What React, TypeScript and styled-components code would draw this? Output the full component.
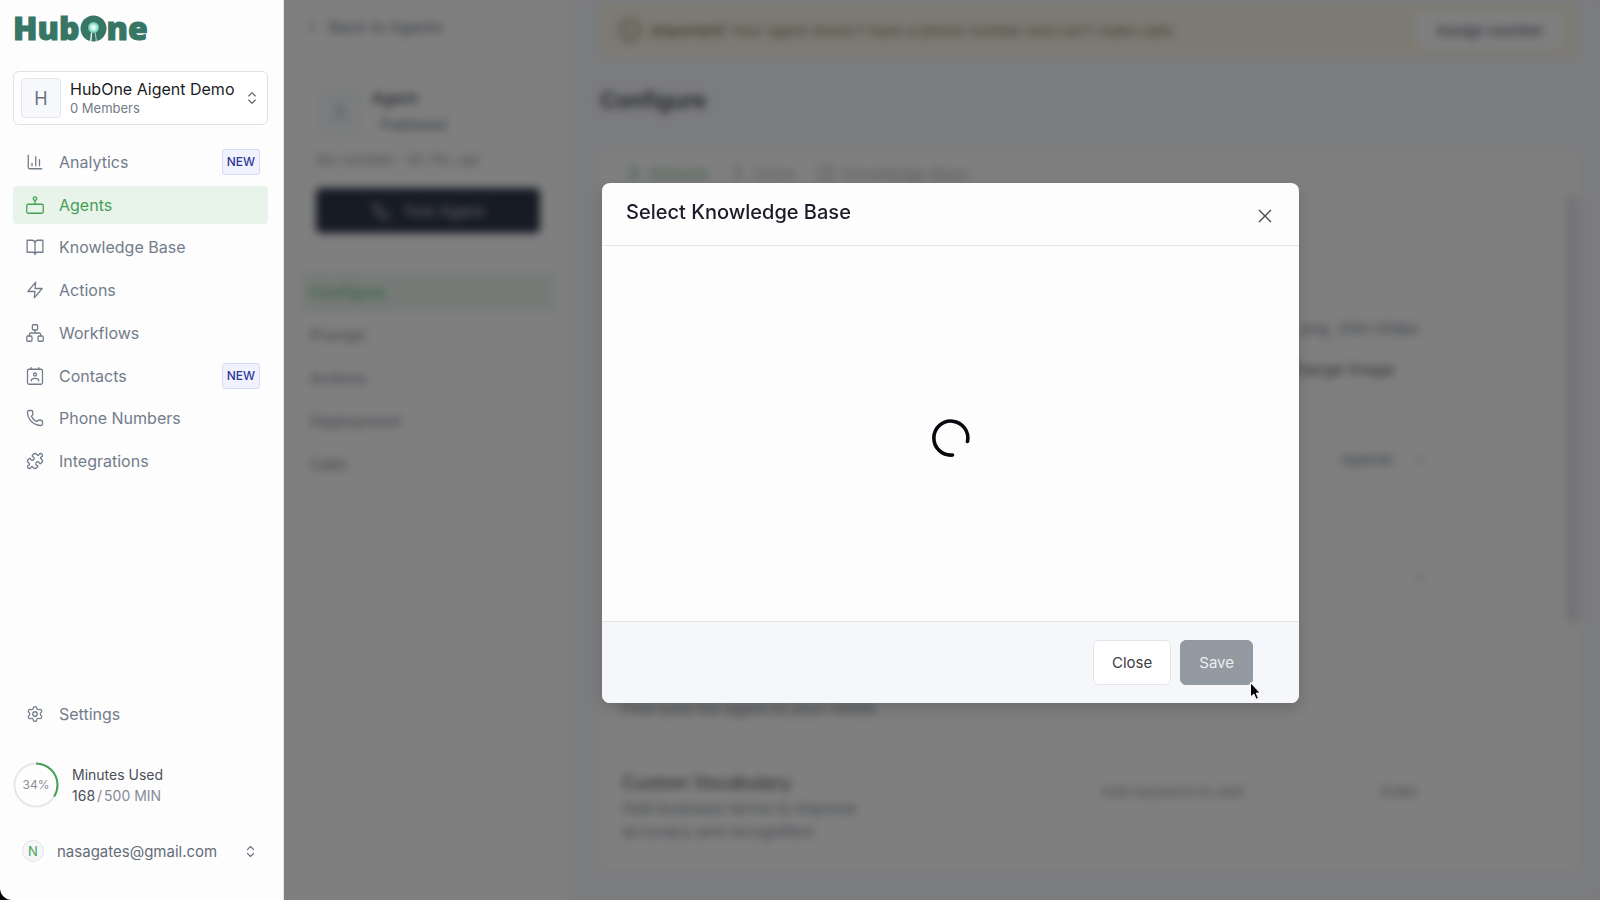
import React from "react";
import styled, { createGlobalStyle, css } from "styled-components";
import { ChartColumn, Phone, Puzzle, Settings, ChevronsUpDown, ChevronLeft, ChevronDown, Info, Mic, User, BookOpen } from "lucide-react";

const GlobalStyle = createGlobalStyle`
  * { box-sizing: border-box; }
  body {
    margin: 0;
    background: #000;
    font-family: Inter, "Liberation Sans", sans-serif;
    color: #1c1c28;
  }
  button, input, select { font-family: inherit; font-size: inherit; }
  h1, h2, p { margin: 0; }
`;

/* ---------- page frame ---------- */

const Page = styled.div`
  display: flex;
  height: 100vh;
  overflow: hidden;
`;

const Sidebar = styled.aside`
  display: flex;
  flex-direction: column;
  flex: 0 0 284px;
  padding: 12px 15px 37px 13px;
  background: #fdfdfd;
  border-right: 1px solid #e3e3e5;
  border-bottom-left-radius: 12px;
`;

const Workspace = styled.div`
  position: relative;
  display: flex;
  flex: 1;
  min-width: 0;
  background: #fff;
`;

/* ---------- sidebar ---------- */

const Logo = styled.a`
  display: flex;
  align-items: center;
  height: 32px;
  color: #377565;
  font: 800 32px/32px "Open Sans", sans-serif;
  -webkit-text-stroke: 1px #377565;
  text-decoration: none;
  svg { display: block; }
`;

const AccountSwitcher = styled.button`
  display: flex;
  align-items: center;
  height: 54px;
  margin: 27px 0 18px;
  padding: 0 7px;
  border: 1px solid #dfe1e6;
  border-radius: 6px;
  background: #fff;
  color: #5d6470;
  text-align: left;
`;

const AccountInitial = styled.span`
  display: grid;
  place-items: center;
  width: 40px;
  height: 40px;
  margin-right: 9px;
  border: 1px solid #e4e6ec;
  border-radius: 4px;
  background: #f8f9fc;
  color: #6c717d;
  font-size: 18px;
`;

const AccountText = styled.span`
  flex: 1;
  white-space: nowrap;
`;

const AccountName = styled.span`
  display: block;
  color: #1c1c24;
  font-size: 16px;
  line-height: 20px;
`;

const AccountMeta = styled.span`
  display: block;
  color: #747a86;
  font-size: 13px;
  line-height: 19px;
`;

const Nav = styled.nav`
  display: flex;
  flex-direction: column;
  justify-content: space-between;
  height: 337px;
`;

const NavLink = styled.a<{ $active?: boolean }>`
  display: flex;
  align-items: center;
  gap: 15px;
  flex: 0 0 38px;
  padding: 0 8px 0 13px;
  border-radius: 4px;
  background: ${(p) => (p.$active ? "#e8f4e9" : "transparent")};
  color: ${(p) => (p.$active ? "#45a055" : "#737c8a")};
  font-size: 16px;
  text-decoration: none;
  svg { flex: none; }
`;

const NewBadge = styled.span`
  margin-left: auto;
  padding: 0 4px;
  border: 1px solid #d5daf5;
  border-radius: 3px;
  background: #f0f3fd;
  color: #303898;
  font-size: 12px;
  font-weight: 500;
  line-height: 24px;
`;

const SidebarFoot = styled.div`
  display: flex;
  flex-direction: column;
  margin-top: auto;
`;

const Usage = styled.section`
  display: flex;
  align-items: center;
  gap: 13px;
  height: 46px;
  margin: 29px 0 31px;
  color: #4a4f59;
  font-size: 14px;
  line-height: 21px;
`;

const Ring = styled.div`
  display: grid;
  width: 46px;
  height: 46px;
  > * { grid-area: 1 / 1; }
  span {
    place-self: center;
    color: #8a8e96;
    font-size: 12px;
    line-height: 16px;
  }
`;

const UsageLine = styled.p`
  display: flex;
  gap: 2px;
`;

const UsageTotal = styled.span`
  color: #858b96;
`;

const UserSwitcher = styled.button`
  display: flex;
  align-items: center;
  gap: 13px;
  height: 24px;
  padding: 0 10px 0 9px;
  border: 0;
  background: none;
  color: #646c7a;
  font-size: 15px;
`;

const UserInitial = styled.span`
  display: grid;
  place-items: center;
  width: 22px;
  height: 22px;
  border: 1px solid #e2e4e8;
  border-radius: 50%;
  background: #f5f6f8;
  color: #45a055;
  font-size: 13px;
`;

const UserMail = styled.span`
  flex: 1;
  text-align: left;
`;

/* ---------- agent column ---------- */

const AgentColumn = styled.div`
  flex: 0 0 286px;
  padding: 14px 14px 0 17px;
  border-right: 1px solid #eef0f4;
`;

const BackLink = styled.a`
  display: flex;
  align-items: center;
  gap: 9px;
  height: 26px;
  padding-left: 3px;
  color: #777d89;
  font-size: 16px;
  text-decoration: none;
`;

const AgentCard = styled.section`
  display: flex;
  flex-direction: column;
  margin: 33px 0 25px;
  padding: 14px;
  border: 1px solid #f3f4f6;
  border-radius: 8px;
`;

const AgentHead = styled.div`
  display: flex;
  gap: 9px;
`;

const AgentAvatar = styled.span`
  display: grid;
  place-items: center;
  width: 47px;
  height: 47px;
  border-radius: 6px;
  background: #f7f9fc;
  color: #a3b5b0;
`;

const AgentName = styled.h2`
  color: #4a4f5a;
  font-size: 16px;
  font-weight: 500;
  line-height: 20px;
`;

const AgentStatus = styled.p`
  margin-top: 6px;
  padding: 0 9px;
  color: #66707c;
  font-size: 14px;
  line-height: 22px;
`;

const AgentMeta = styled.p`
  margin: 12px 0 16px;
  color: #999faa;
  font-size: 15px;
  line-height: 24px;
`;

const TestButton = styled.button`
  display: flex;
  align-items: center;
  justify-content: center;
  gap: 13px;
  height: 45px;
  border: 0;
  border-radius: 5px;
  background: #2e364a;
  color: #c6c6d6;
  font-size: 16px;
`;

const SubNav = styled.nav`
  display: grid;
  gap: 5px;
`;

const SubLink = styled.a<{ $active?: boolean }>`
  padding: 0 9px;
  border-radius: 4px;
  background: ${(p) => (p.$active ? "#ebf5ef" : "transparent")};
  color: ${(p) => (p.$active ? "#62ba7c" : "#858a97")};
  font-size: 16px;
  line-height: 38px;
  text-decoration: none;
`;

/* ---------- configuration pane ---------- */

const Main = styled.main`
  display: flex;
  flex-direction: column;
  flex: 1;
  min-width: 0;
  padding: 4px 22px 30px 30px;
  background: #f7f8fc;
`;

const Notice = styled.div`
  display: flex;
  align-items: center;
  gap: 9px;
  height: 52px;
  padding: 0 15px 0 18px;
  border-radius: 6px;
  background: #f8f5e6;
  color: #8f826c;
  font-size: 15px;
  button {
    width: 146px;
    height: 38px;
    margin-left: auto;
    border: 0;
    border-radius: 5px;
    background: #fff;
    color: #686f7c;
    font-weight: 500;
  }
  strong { font-weight: 600; }
`;

const PageTitle = styled.h1`
  margin: 28px 0 36px;
  color: #3d4350;
  font-size: 22px;
  font-weight: 600;
  line-height: 32px;
`;

const Panel = styled.section`
  display: flex;
  flex-direction: column;
  flex: 1;
  min-height: 0;
  overflow: hidden;
  border-radius: 8px;
  background: #fff;
`;

const Tabs = styled.div`
  display: flex;
  gap: 22px;
  height: 43px;
  padding: 0 26px;
  border-bottom: 1px solid #f5f6f8;
`;

const Tab = styled.button<{ $active?: boolean }>`
  display: flex;
  align-items: center;
  gap: 7px;
  padding: 0;
  border: 0;
  background: none;
  color: ${(p) => (p.$active ? "#7cc398" : "#b0b3bb")};
  font-size: 16px;
`;

const PanelBody = styled.div`
  display: flex;
  flex: 1;
  min-height: 0;
`;

const Rows = styled.div`
  flex: 1;
  padding: 0 31px 0 22px;
`;

const Row = styled.div<{ $h: number }>`
  display: flex;
  justify-content: space-between;
  height: ${(p) => p.$h}px;
  padding: 24px 96px 0 0;
  border-bottom: 1px solid #f0f0f3;
  &:last-child { border-bottom: 0; }
`;

const RowText = styled.div`
  width: 280px;
  color: #868e9a;
  font-size: 16px;
  line-height: 23px;
  h2 {
    color: #62656c;
    font-size: 18px;
    font-weight: 500;
    line-height: 28px;
  }
`;

const Control = styled.div`
  display: flex;
  flex-direction: column;
  align-items: flex-end;
  width: 354px;
`;

const field = css`
  width: 100%;
  height: 46px;
  padding: 0 15px;
  border: 1px solid #eceef1;
  border-radius: 5px;
  background: transparent;
  color: #78838e;
  font-size: 15px;
`;

const TextField = styled.input`
  ${field}
  &::placeholder { color: #989eac; }
`;

const SelectWrap = styled.div`
  display: grid;
  align-items: center;
  width: 100%;
  color: #8a909c;
  > * { grid-area: 1 / 1; }
  svg { justify-self: end; margin-right: 12px; }
`;

const Select = styled.select`
  ${field}
  appearance: none;
  padding-right: 45px;
  text-align: right;
  text-align-last: right;
`;

const Hint = styled.p`
  padding-right: 20px;
  color: #7d8693;
  font-size: 15px;
  line-height: 24px;
`;

const ImageButton = styled.button`
  width: 150px;
  height: 43px;
  margin: 6px 24px 0 0;
  border: 1px solid #eceef1;
  border-radius: 5px;
  background: transparent;
  color: #62656c;
  font-size: 16px;
`;

const WordField = styled.div`
  display: flex;
  align-items: center;
  width: 100%;
  height: 44px;
  padding-right: 20px;
  border: 1px solid #eceef1;
  border-radius: 5px;
  input { border: 0; height: 40px; min-width: 0; flex: 1; }
  button {
    padding: 0;
    border: 0;
    background: none;
    color: #9296a0;
    font-size: 15px;
  }
`;

const ScrollTrack = styled.div`
  width: 12px;
  height: 429px;
  border-radius: 6px;
  background: #e3e6e9;
`;

/* ---------- dialog ---------- */

const Overlay = styled.div`
  position: absolute;
  inset: 0;
  display: flex;
  align-items: center;
  justify-content: center;
  padding: 0 0 14px 17px;
  background: rgba(0, 0, 0, 0.5);
  backdrop-filter: blur(4px);
`;

const Dialog = styled.div`
  display: flex;
  flex-direction: column;
  width: 697px;
  max-width: 90%;
  overflow: hidden;
  border-radius: 8px;
  background: #fdfdfd;
  box-shadow: 0 6px 16px rgba(0, 0, 0, 0.16);
`;

const DialogHead = styled.header`
  display: flex;
  justify-content: space-between;
  height: 63px;
  padding: 15px 24px 0;
  border-bottom: 1px solid #e3e5e9;
  h2 {
    font-size: 20px;
    font-weight: 500;
    line-height: 28px;
  }
`;

const IconButton = styled.button`
  display: grid;
  place-items: center;
  width: 20px;
  height: 36px;
  padding: 0;
  border: 0;
  background: none;
  color: #44464d;
`;

const DialogBody = styled.div`
  display: grid;
  place-items: center;
  height: 375px;
  padding-top: 8px;
`;

const DialogFoot = styled.footer`
  display: flex;
  justify-content: flex-end;
  gap: 9px;
  padding: 18px 46px 18px 24px;
  border-top: 1px solid #e3e5e9;
  background: #f6f7fb;
`;

const Button = styled.button<{ $primary?: boolean }>`
  height: 45px;
  padding: 0 18px;
  border: 1px solid ${(p) => (p.$primary ? "#9299a1" : "#e2e4e7")};
  border-radius: 6px;
  background: ${(p) => (p.$primary ? "#9299a1" : "#fff")};
  color: ${(p) => (p.$primary ? "#eceef0" : "#3c3e44")};
  font-size: 15px;
`;

const SaveSlot = styled.div`
  position: relative;
`;

const Pointer = styled.svg`
  position: absolute;
  right: -8px;
  bottom: -16px;
`;

/* ---------- drawings ---------- */

const Glyph = ({ children }: { children: React.ReactNode }) => (
  <svg width="18" height="18" viewBox="0 0 24 24" fill="none" stroke="currentColor" strokeWidth="1.7" strokeLinecap="round" strokeLinejoin="round" aria-hidden="true">
    {children}
  </svg>
);

const AgentIcon = () => (
  <Glyph>
    <rect x="1" y="11" width="22" height="12" rx="2" />
    <circle cx="12" cy="3.5" r="2.3" />
    <path d="M12 6v5" />
  </Glyph>
);

const BookIcon = () => (
  <Glyph>
    <path d="M1.500 3H8a4 4 0 0 1 4 4v15a3 3 0 0 0-3-3H1.500zM22.500 3H16a4 4 0 0 0-4 4v15a3 3 0 0 1 3-3h7.500z" />
  </Glyph>
);

const ZapIcon = () => (
  <Glyph>
    <path d="M13 1.500 2.500 14H12l-1 8.500L21.500 10H12z" />
  </Glyph>
);

const WorkflowIcon = () => (
  <Glyph>
    <rect x="8.500" y="1" width="7" height="7" rx="1.500" />
    <rect x="1" y="16" width="7" height="7" rx="1.500" />
    <rect x="16" y="16" width="7" height="7" rx="1.500" />
    <path d="M12 8v4M4.500 16v-2a2 2 0 0 1 2-2h11a2 2 0 0 1 2 2v2" />
  </Glyph>
);

const ContactIcon = () => (
  <Glyph>
    <rect x="2" y="3" width="20" height="20" rx="2" />
    <path d="M7 1v2M17 1v2M7 18.500c0-2 1.700-3.200 5-3.200s5 1.200 5 3.200" />
    <circle cx="12" cy="10" r="2" />
  </Glyph>
);

const LogoRing = () => (
  <svg width="27" height="27" viewBox="0 0 27 27" aria-hidden="true">
    <defs>
      <radialGradient id="bead">
        <stop offset="0" stopColor="#f4fffb" />
        <stop offset="0.45" stopColor="#c9f3e5" />
        <stop offset="1" stopColor="#52c9a4" />
      </radialGradient>
    </defs>
    <circle cx="13.500" cy="13.500" r="13" fill="#377565" stroke="none" />
    <path d="M11 17h1.200l-.8 9.500-1.400-.2z" fill="#fdfdfd" stroke="none" />
    <path d="M14.600 17h.9l1.500 9.300-1 .2z" fill="#b9d3cb" stroke="none" />
    <circle cx="13.500" cy="12.500" r="5.500" fill="url(#bead)" stroke="none" />
  </svg>
);

const navItems = [
  { label: "Analytics", icon: <ChartColumn size={18} strokeWidth={1.7} />, fresh: true },
  { label: "Agents", icon: <AgentIcon />, active: true },
  { label: "Knowledge Base", icon: <BookIcon /> },
  { label: "Actions", icon: <ZapIcon /> },
  { label: "Workflows", icon: <WorkflowIcon /> },
  { label: "Contacts", icon: <ContactIcon />, fresh: true },
  { label: "Phone Numbers", icon: <Phone size={18} strokeWidth={1.7} /> },
  { label: "Integrations", icon: <Puzzle size={18} strokeWidth={1.7} /> },
];

const subItems = ["Configure", "Prompt", "Actions", "Deployment", "Calls"];

export default function App() {
  return (
    <>
      <GlobalStyle />
      <Page>
        <Sidebar>
          <Logo href="#" aria-label="HubOne">
            Hub
            <LogoRing />
            ne
          </Logo>
          <AccountSwitcher>
            <AccountInitial>H</AccountInitial>
            <AccountText>
              <AccountName>HubOne Aigent Demo</AccountName>
              <AccountMeta>0 Members</AccountMeta>
            </AccountText>
            <ChevronsUpDown size={16} strokeWidth={1.7} />
          </AccountSwitcher>
          <Nav>
            {navItems.map((item) => (
              <NavLink key={item.label} href="#" $active={item.active}>
                {item.icon}
                {item.label}
                {item.fresh && <NewBadge>NEW</NewBadge>}
              </NavLink>
            ))}
          </Nav>
          <SidebarFoot>
            <NavLink href="#">
              <Settings size={18} strokeWidth={1.7} />
              Settings
            </NavLink>
            <Usage>
              <Ring>
                <svg width="46" height="46" viewBox="0 0 46 46" fill="none" strokeWidth="2" aria-hidden="true">
                  <circle cx="23" cy="23" r="21.500" stroke="#e6e7e9" />
                  <circle cx="23" cy="23" r="21.500" stroke="#45a055" pathLength="100" strokeDasharray="34 66" transform="rotate(-90 23 23)" />
                </svg>
                <span>34%</span>
              </Ring>
              <div>
                <p>Minutes Used</p>
                <UsageLine>
                  <span>168</span>
                  <UsageTotal>/</UsageTotal>
                  <UsageTotal>500 MIN</UsageTotal>
                </UsageLine>
              </div>
            </Usage>
            <UserSwitcher>
              <UserInitial>N</UserInitial>
              <UserMail>nasagates@gmail.com</UserMail>
              <ChevronsUpDown size={15} strokeWidth={1.7} />
            </UserSwitcher>
          </SidebarFoot>
        </Sidebar>

        <Workspace>
          <AgentColumn>
            <BackLink href="#">
              <ChevronLeft size={16} />
              Back to Agents
            </BackLink>
            <AgentCard>
              <AgentHead>
                <AgentAvatar>
                  <User size={20} />
                </AgentAvatar>
                <div>
                  <AgentName>Agent</AgentName>
                  <AgentStatus>Published</AgentStatus>
                </div>
              </AgentHead>
              <AgentMeta>No number · ID: Pk..upl</AgentMeta>
              <TestButton>
                <Phone size={18} />
                Test Agent
              </TestButton>
            </AgentCard>
            <SubNav>
              {subItems.map((label, i) => (
                <SubLink key={label} href="#" $active={i === 0}>
                  {label}
                </SubLink>
              ))}
            </SubNav>
          </AgentColumn>

          <Main>
            <Notice>
              <Info size={24} />
              <span>
                <strong>Important!</strong> Your agent doesn't have a phone number and can't make calls
              </span>
              <button>Assign number</button>
            </Notice>
            <PageTitle>Configure</PageTitle>
            <Panel>
              <Tabs>
                <Tab $active>
                  <Mic size={16} />
                  General
                </Tab>
                <Tab>
                  <User size={16} />
                  Voice
                </Tab>
                <Tab>
                  <BookOpen size={18} />
                  Knowledge Base
                </Tab>
              </Tabs>
              <PanelBody>
                <Rows>
                  <Row $h={98}>
                    <RowText />
                    <Control>
                      <TextField aria-label="Name" />
                    </Control>
                  </Row>
                  <Row $h={119}>
                    <RowText />
                    <Control>
                      <Hint>png, 256x256px</Hint>
                      <ImageButton>Change Image</ImageButton>
                    </Control>
                  </Row>
                  <Row $h={119}>
                    <RowText />
                    <Control>
                      <SelectWrap>
                        <Select aria-label="Provider">
                          <option>OpenAI</option>
                        </Select>
                        <ChevronDown size={15} />
                      </SelectWrap>
                    </Control>
                  </Row>
                  <Row $h={119}>
                    <RowText />
                    <Control>
                      <SelectWrap>
                        <Select aria-label="Language" />
                        <ChevronDown size={15} />
                      </SelectWrap>
                    </Control>
                  </Row>
                  <Row $h={95}>
                    <RowText>
                      <br />
                      Fine tune the agent to your needs
                    </RowText>
                  </Row>
                  <Row $h={125}>
                    <RowText>
                      <h2>Custom Vocabulary</h2>
                      Add business terms to improve accuracy and recognition
                    </RowText>
                    <Control>
                      <WordField>
                        <TextField aria-label="Word" placeholder="Add keyword to add" />
                        <button>Enter</button>
                      </WordField>
                    </Control>
                  </Row>
                </Rows>
                <ScrollTrack />
              </PanelBody>
            </Panel>
          </Main>

          <Overlay>
            <Dialog role="dialog" aria-modal="true" aria-labelledby="dialog-title">
              <DialogHead>
                <h2 id="dialog-title">Select Knowledge Base</h2>
                <IconButton aria-label="Close dialog">
                  <svg width="14" height="14" viewBox="0 0 14 14" fill="none" stroke="currentColor" strokeWidth="1.300" aria-hidden="true">
                    <path d="M1 1l12 12M13 1 1 13" />
                  </svg>
                </IconButton>
              </DialogHead>
              <DialogBody>
                <svg width="40" height="40" viewBox="0 0 40 40" fill="none" stroke="#08080f" strokeWidth="3.600" strokeLinecap="round" role="img" aria-label="Loading">
                  <path d="M36.500 23.500A17 17 0 1 0 21.500 37" />
                </svg>
              </DialogBody>
              <DialogFoot>
                <Button>Close</Button>
                <SaveSlot>
                  <Button $primary disabled>
                    Save
                  </Button>
                  <Pointer width="12" height="20" viewBox="0 0 12 20" aria-hidden="true">
                    <path d="M1.500 1.500v14.500l3.300-3 2.300 5.300 2.400-1-2.300-5.200h4z" fill="#000" stroke="#fff" strokeWidth="1" />
                  </Pointer>
                </SaveSlot>
              </DialogFoot>
            </Dialog>
          </Overlay>
        </Workspace>
      </Page>
    </>
  );
}
